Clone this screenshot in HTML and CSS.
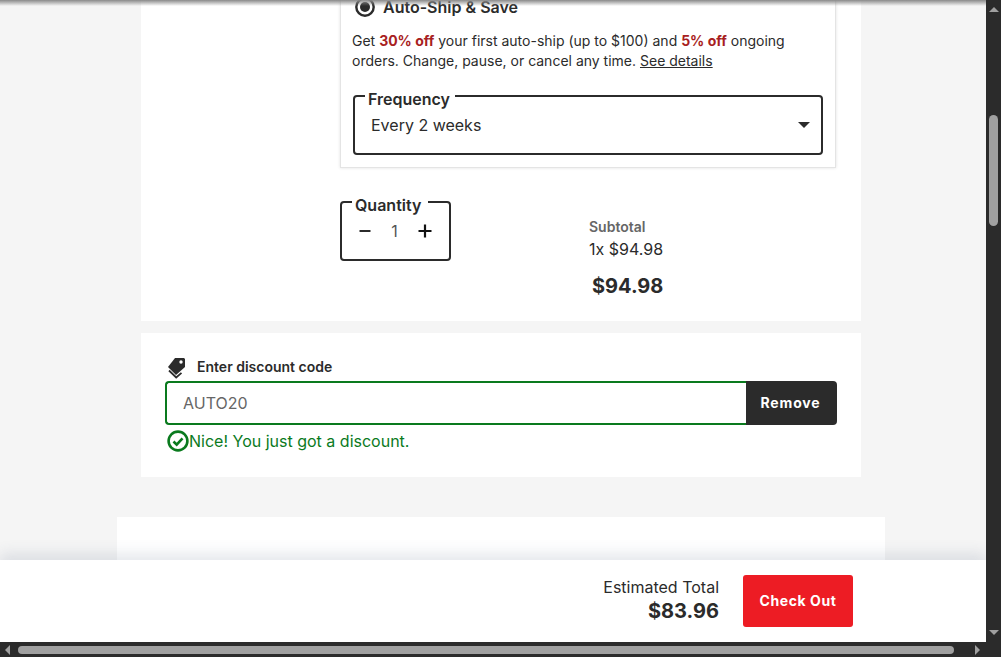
FILE: index.html

```html
<!DOCTYPE html>
<html lang="en">
<head>
    <meta charset="UTF-8">
    <meta name="viewport" content="width=device-width, initial-scale=1.0">
    <title>Cart</title>
    <link rel="stylesheet" href="styles.css">
</head>
<body>
    <div class="window">
        <div class="view">
            <div class="page">
                <div class="content">
                    <section class="panel panel-item">
                        <div class="option-card">
                            <div class="option-head">
                                <svg class="radio" viewBox="0 0 20 20" width="20" height="20">
                                    <circle cx="10" cy="10" r="8.7" fill="none" stroke="#2b2b2b" stroke-width="2.4"/>
                                    <circle cx="10" cy="10" r="5" fill="#2b2b2b"/>
                                </svg>
                                <span class="option-title">Auto-Ship &amp; Save</span>
                            </div>
                            <p class="option-text">Get <b>30% off</b> your first auto-ship (up to $100) and <b>5% off</b> ongoing orders. Change, pause, or cancel any time. <a href="#">See details</a></p>
                            <fieldset class="field field-frequency">
                                <legend>Frequency</legend>
                                <div class="select-value">
                                    <span>Every 2 weeks</span>
                                    <span class="caret"></span>
                                </div>
                            </fieldset>
                        </div>
                        <div class="buy-row">
                            <fieldset class="field field-quantity">
                                <legend>Quantity</legend>
                                <div class="stepper">
                                    <svg viewBox="0 0 12 12" width="12" height="12"><path d="M0.5 6h11" stroke="#2b2b2b" stroke-width="2"/></svg>
                                    <span class="qty">1</span>
                                    <svg viewBox="0 0 14 14" width="14" height="14"><path d="M0.5 7h13M7 0.5v13" stroke="#111" stroke-width="2.2"/></svg>
                                </div>
                            </fieldset>
                            <div class="summary">
                                <div class="summary-label">Subtotal</div>
                                <div class="summary-line">1x $94.98</div>
                                <div class="summary-price">$94.98</div>
                            </div>
                        </div>
                    </section>

                    <section class="panel panel-discount">
                        <div class="discount-label">
                            <svg viewBox="0 0 20 22" width="20" height="22">
                                <path d="M7 1h9l1 1v8l-9 8-8-8z" fill="#2b2b2b"/>
                                <circle cx="13" cy="5" r="1.7" fill="#fff"/>
                                <path d="M1 13.5l7.2 7 5.3-4.6" fill="none" stroke="#2b2b2b" stroke-width="1.8"/>
                            </svg>
                            <span>Enter discount code</span>
                        </div>
                        <div class="discount-form">
                            <input class="discount-input" type="text" placeholder="AUTO20">
                            <button class="btn-remove">Remove</button>
                        </div>
                        <div class="discount-ok">
                            <svg viewBox="0 0 22 22" width="22" height="22">
                                <circle cx="11" cy="11" r="9.4" fill="none" stroke="#0a7a1e" stroke-width="2.6"/>
                                <path d="M6.5 11.5l3.2 3.2 5.8-6.4" fill="none" stroke="#0a7a1e" stroke-width="2.6"/>
                            </svg>
                            <span>Nice! You just got a discount.</span>
                        </div>
                    </section>

                    <section class="panel-wide"></section>
                </div>

                <div class="top-shadow"></div>
                <div class="checkout-bar">
                    <div class="total">
                        <div class="total-label">Estimated Total</div>
                        <div class="total-price">$83.96</div>
                    </div>
                    <button class="btn-checkout">Check Out</button>
                </div>
            </div>

            <div class="vscroll">
                <span class="arrow arrow-up"></span>
                <div class="vtrack"><div class="vthumb"></div></div>
                <span class="arrow arrow-down"></span>
            </div>
        </div>
        <div class="hscroll">
            <span class="arrow arrow-left"></span>
            <div class="hthumb"></div>
            <span class="arrow arrow-right"></span>
        </div>
    </div>
</body>
</html>
```

FILE: styles.css

```css
* {
    box-sizing: border-box;
}

body {
    font-family: Inter, "Liberation Sans", sans-serif;
    background-color: #f5f5f5;
    color: #2b2b2b;
    margin: 0;
    padding: 0;
    overflow: hidden;
}

.window {
    width: 1001px;
    height: 657px;
    display: flex;
    flex-direction: column;
}

.view {
    flex: 1;
    display: flex;
    min-height: 0;
}

.page {
    flex: 1;
    position: relative;
    overflow: hidden;
}

.content {
    width: 1002px;
    margin-top: -30px;
}

.panel {
    width: 720px;
    margin: 0 auto;
    background-color: #fff;
}

.panel-item {
    padding: 0 25px 22px 199px;
}

.option-card {
    border: 1px solid #e4e4e4;
    border-top: 0;
    box-shadow: 0 0 3px rgba(0, 0, 0, 0.12);
    padding: 26px 12px 12px 11px;
}

.option-head {
    display: flex;
    align-items: center;
    gap: 8px;
    margin-left: 3px;
    height: 22px;
}

.option-title {
    font-size: 16px;
    font-weight: 600;
}

.option-text {
    font-size: 14px;
    line-height: 20px;
    margin: 13px 0 0;
}

.option-text b {
    color: #a81e22;
    font-weight: 700;
}

.option-text a {
    color: #2b2b2b;
}

.field {
    border: 2px solid #2b2b2b;
    border-radius: 4px;
    margin: 0;
    padding: 0;
    min-width: 0;
}

/* legend is taller than its text so the label sits a bit under the border line */
.field legend {
    font-size: 16px;
    font-weight: 600;
    line-height: 18px;
    padding-top: 6px;
    margin-left: 10px;
}

.field-frequency {
    margin: 13px 0 0 1px;
    height: 71px;
}

.field-frequency legend {
    padding-left: 3px;
    padding-right: 5px;
}

.select-value {
    display: flex;
    align-items: center;
    justify-content: space-between;
    font-size: 16px;
    padding: 7px 11px 0 16px;
}

.caret {
    width: 0;
    height: 0;
    border-left: 6.5px solid transparent;
    border-right: 6.5px solid transparent;
    border-top: 6.5px solid #2b2b2b;
}

.buy-row {
    display: flex;
    margin-top: 22px;
}

.field-quantity {
    width: 111px;
    height: 71px;
}

.field-quantity legend {
    padding-left: 3px;
    padding-right: 7px;
}

.stepper {
    display: flex;
    align-items: center;
    justify-content: space-between;
    padding: 7px 17px 0 17px;
    font-size: 16px;
}

.qty {
    color: #555;
}

.summary {
    margin-left: 138px;
    margin-top: 28px;
    width: 74px;
    white-space: nowrap;
}

.summary-label {
    font-size: 14px;
    font-weight: 600;
    color: #666;
    line-height: 18px;
}

.summary-line {
    font-size: 16px;
    line-height: 20px;
    margin-top: 3px;
}

.summary-price {
    font-size: 20px;
    font-weight: 700;
    line-height: 26px;
    margin-top: 14px;
    margin-left: 3px;
}

.panel-discount {
    margin-top: 12px;
    padding: 23px 24px 25px;
}

.discount-label {
    display: flex;
    align-items: center;
    gap: 9px;
    margin-left: 3px;
    height: 25px;
    font-size: 14px;
    font-weight: 600;
}

.discount-label svg {
    margin-bottom: 2px;
}

.discount-label span {
    padding-bottom: 5px;
}

.discount-form {
    display: flex;
    height: 44px;
}

.discount-input {
    flex: 1;
    min-width: 0;
    border: 2px solid #0a7a1e;
    border-right: 0;
    border-radius: 4px 0 0 4px;
    background-color: #fff;
    font-family: inherit;
    font-size: 16px;
    padding: 0 16px;
    outline: none;
}

.discount-input::placeholder {
    color: #666;
    opacity: 1;
}

.btn-remove {
    flex: none;
    width: 91px;
    background-color: #2b2b2b;
    color: #fff;
    border: none;
    border-radius: 0 4px 4px 0;
    padding: 0 2px 2px 0;
    font-family: inherit;
    font-size: 14px;
    font-weight: 700;
    letter-spacing: 0.85px;
}

.discount-ok {
    display: flex;
    align-items: center;
    margin: 5px 0 0 2px;
    color: #0a7a1e;
    font-size: 16px;
    height: 22px;
}

.panel-wide {
    width: 768px;
    height: 200px;
    margin: 40px auto 0;
    background-color: #fff;
}

.top-shadow {
    position: absolute;
    top: 0;
    left: 0;
    right: 0;
    height: 6px;
    background: linear-gradient(#8a8a8a, rgba(138, 138, 138, 0));
}

.checkout-bar {
    position: absolute;
    left: 0;
    right: 0;
    bottom: 0;
    height: 82px;
    background-color: #fff;
    box-shadow: 0 -6px 14px rgba(60, 80, 110, 0.14);
    display: flex;
    align-items: center;
    justify-content: flex-end;
    padding-right: 133px;
    gap: 24px;
}

.total {
    text-align: right;
}

.total-label {
    font-size: 16px;
    line-height: 20px;
}

.total-price {
    font-size: 20px;
    font-weight: 700;
    line-height: 28px;
}

.btn-checkout {
    width: 110px;
    height: 52px;
    background-color: #ed1c24;
    color: #fff;
    border: none;
    border-radius: 3px;
    padding-bottom: 2px;
    font-family: inherit;
    font-size: 14px;
    font-weight: 700;
    letter-spacing: 0.6px;
}

.vscroll {
    width: 15px;
    background-color: #2b2b2b;
    display: flex;
    flex-direction: column;
    align-items: center;
    padding: 7px 0;
}

.vtrack {
    flex: 1;
    padding-top: 103px;
}

.vthumb {
    width: 9px;
    height: 111px;
    border-radius: 5px;
    background-color: #a0a0a0;
}

.hscroll {
    height: 15px;
    background-color: #2b2b2b;
    display: flex;
    align-items: center;
    padding: 0 21px 0 5px;
}

.hthumb {
    width: 936px;
    height: 8px;
    margin: 0 21px 0 8px;
    border-radius: 4px;
    background-color: #a0a0a0;
}

.arrow {
    width: 0;
    height: 0;
    flex: none;
    border: 5px solid transparent;
}

.arrow-up {
    border-top: 0;
    border-bottom-color: #a0a0a0;
}

.arrow-down {
    border-bottom: 0;
    border-top-color: #a0a0a0;
}

.arrow-left {
    border-left: 0;
    border-right-color: #a0a0a0;
}

.arrow-right {
    border-right: 0;
    border-left-color: #a0a0a0;
}
```
